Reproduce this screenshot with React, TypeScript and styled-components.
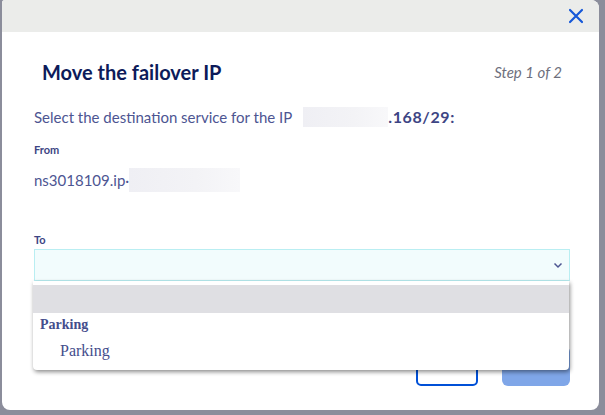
import React from "react";
import styled, { createGlobalStyle } from "styled-components";

const Global = createGlobalStyle`
  html, body { margin: 0; padding: 0; }
  body {
    background: #8b8d9b;
    font-family: "Lato", "Noto Sans", sans-serif;
    overflow: hidden;
  }
`;

const Stage = styled.div`
  width: 605px;
  height: 415px;
  position: relative;
  overflow: hidden;
  background: #8b8d9b;
`;

const Modal = styled.div`
  margin-left: 2px;
  width: 597px;
  height: 410px;
  background: #ffffff;
  border-radius: 3px 8px 8px 8px;
  overflow: hidden;
  display: flex;
  flex-direction: column;
  box-sizing: border-box;
`;

const Header = styled.div`
  height: 32px;
  flex: 0 0 32px;
  background: #ebecea;
  display: flex;
  align-items: center;
  justify-content: flex-end;
  padding-right: 14px;
`;

const CloseButton = styled.button`
  border: 0;
  background: transparent;
  padding: 0;
  width: 18px;
  height: 18px;
  display: flex;
  align-items: center;
  justify-content: center;
  cursor: pointer;
`;

const Body = styled.div`
  padding: 0 29px 24px 30px;
  display: flex;
  flex-direction: column;
  flex: 1;
`;

const TitleRow = styled.div`
  margin-top: 26px;
  padding: 0 8px 0 10px;
  display: flex;
  align-items: center;
  justify-content: space-between;
  height: 28px;
`;

const Title = styled.h2`
  margin: 0;
  font-family: "Lato", sans-serif;
  font-weight: 700;
  font-size: 20px;
  color: #0d1b5a;
`;

const Step = styled.span`
  font-family: "Lato", sans-serif;
  font-style: italic;
  font-size: 15px;
  color: #6e6f7d;
`;

const Intro = styled.p`
  margin: 21px 0 0 2px;
  font-family: "Lato", sans-serif;
  font-size: 15px;
  line-height: 20px;
  color: #4d5592;
  display: flex;
  align-items: center;
  white-space: pre;
`;

const Blur = styled.span<{ $w: number; $h: number; $ml?: number }>`
  display: inline-block;
  margin-left: ${(p) => p.$ml ?? 0}px;
  width: ${(p) => p.$w}px;
  height: ${(p) => p.$h}px;
  background: linear-gradient(90deg, #efeff4, #f3f3f6 60%, #f8f8fa);
`;

const Strong = styled.b`
  font-weight: 700;
  font-size: 16px;
  letter-spacing: 0.6px;
  color: #3d4584;
`;

const Label = styled.div<{ $mt: number }>`
  margin: ${(p) => p.$mt}px 0 0 2px;
  font-family: "Lato", sans-serif;
  font-weight: 700;
  font-size: 11px;
  line-height: 14px;
  color: #3d4584;
`;

const Value = styled.div`
  margin: 11px 0 0 2px;
  height: 24px;
  display: flex;
  align-items: center;
  font-family: "Lato", sans-serif;
  font-size: 15px;
  color: #4d5592;
`;

const SelectWrap = styled.div`
  position: relative;
  margin: 2px 0 0 2px;
`;

const SelectBox = styled.div`
  height: 32px;
  box-sizing: border-box;
  border: 1px solid #b9eef2;
  background: #f2fcfd;
  display: flex;
  align-items: center;
  justify-content: flex-end;
  padding-right: 5px;
`;

const Listbox = styled.ul`
  position: absolute;
  top: 32px;
  left: -1px;
  width: 536px;
  height: 89px;
  margin: 0;
  padding: 4px 0 0 0;
  box-sizing: border-box;
  list-style: none;
  background: #ffffff;
  border-radius: 0 0 4px 4px;
  box-shadow: 1px 2px 4px rgba(0, 0, 0, 0.45);
  font-family: "Liberation Serif", "Times New Roman", serif;
  color: #444d8c;
  z-index: 5;
`;

const Option = styled.li<{ $active?: boolean; $group?: boolean }>`
  height: ${(p) => (p.$group ? 24 : 28)}px;
  display: flex;
  align-items: center;
  padding-left: ${(p) => (p.$group ? 7 : 27)}px;
  background: ${(p) => (p.$active ? "#dfdfe3" : "transparent")};
  font-size: ${(p) => (p.$group ? 14 : 16)}px;
  font-weight: ${(p) => (p.$group ? 700 : 400)};
`;

const Actions = styled.div`
  margin-top: 65px;
  display: flex;
  justify-content: flex-end;
  gap: 24px;
`;

const OutlineBtn = styled.button`
  width: 62px;
  height: 40px;
  box-sizing: border-box;
  border: 2px solid #0050d7;
  border-radius: 5px;
  background: #fff;
`;

const PrimaryBtn = styled.button`
  width: 68px;
  height: 40px;
  border: 0;
  border-radius: 6px;
  background: #7fa6e8;
`;

export default function App() {
  return (
    <Stage>
      <Global />
      <Modal>
        <Header>
          <CloseButton aria-label="Close">
            <svg width="16" height="16" viewBox="0 0 16 16">
              <path d="M2 2 L14 14 M14 2 L2 14" stroke="#1658d8" strokeWidth="2.2" strokeLinecap="round" />
            </svg>
          </CloseButton>
        </Header>
        <Body>
          <TitleRow>
            <Title>Move the failover IP</Title>
            <Step>Step 1 of 2</Step>
          </TitleRow>
          <Intro>
            Select the destination service for the IP
            <Blur $w={85} $h={20} $ml={11} />
            <Strong>.168/29:</Strong>
          </Intro>
          <Label $mt={16}>From</Label>
          <Value>
            ns3018109.ip·
            <Blur $w={111} $h={24} />
          </Value>
          <Label $mt={41}>To</Label>
          <SelectWrap>
            <SelectBox>
              <svg width="12" height="12" viewBox="0 0 12 12">
                <path d="M2.5 4.5 L6 8 L9.5 4.5" fill="none" stroke="#4d5592" strokeWidth="1.5" />
              </svg>
            </SelectBox>
            <Listbox>
              <Option $active>&nbsp;</Option>
              <Option $group>Parking</Option>
              <Option>Parking</Option>
            </Listbox>
          </SelectWrap>
          <Actions>
            <OutlineBtn />
            <PrimaryBtn />
          </Actions>
        </Body>
      </Modal>
    </Stage>
  );
}
